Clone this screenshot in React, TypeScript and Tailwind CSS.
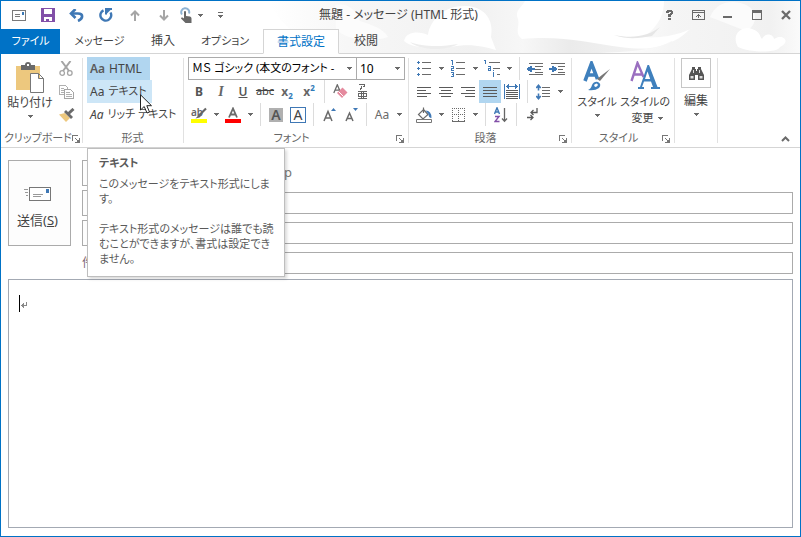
import React from 'react'

interface IconProps {
    w: number
    h: number
    smooth?: boolean
    children: React.ReactNode
}

const Icon = ({ w, h, smooth, children }: IconProps) => (
    <svg width={w} height={h} viewBox={`0 0 ${w} ${h}`} fill="none" shapeRendering={smooth ? 'auto' : 'crispEdges'} aria-hidden="true" className="block shrink-0">
        {children}
    </svg>
)

const Caret = () => (
    <Icon w={5} h={3}>
        <path d="M0 0h5v1H0zM1 1h3v1H1zM2 2h1v1H2z" fill="#6a6a6a" />
    </Icon>
)

const Tool = ({ label, active, children }: { label: string; active?: boolean; children: React.ReactNode }) => (
    <button aria-label={label} className={`flex h-full w-[22px] shrink-0 items-center justify-center ${active ? 'bg-[#b1d6f0]' : ''}`}>
        {children}
    </button>
)

const Drop = ({ label }: { label: string }) => (
    <button aria-label={label} className="flex h-full w-3 shrink-0 items-center justify-center">
        <Caret />
    </button>
)

const Sep = () => (
    <div className="flex h-full w-[9px] shrink-0 justify-center">
        <div className="h-full w-px bg-[#dcdcdc]" />
    </div>
)

const Row = ({ children }: { children: React.ReactNode }) => <div className="flex h-[23px] items-center">{children}</div>

const Launcher = ({ label }: { label: string }) => (
    <button aria-label={label}>
        <Icon w={8} h={8}>
            <path d="M.5 6V.5H6M3 3l3 3M7.5 3v4.5H3" stroke="#777" />
            <path d="M5 5h2v2H5z" fill="#777" />
        </Icon>
    </button>
)

interface GroupProps {
    title?: string
    launcher?: boolean
    className: string
    children: React.ReactNode
}

const Group = ({ title, launcher, className, children }: GroupProps) => (
    <>
        <section className={`relative flex shrink-0 flex-col ${className}`}>
            <div className="h-[69px]">{children}</div>
            <div className="flex h-6 items-center justify-between pt-1 pr-1 pl-[3px]">
                <span className="flex-1 text-center text-[11px] whitespace-nowrap text-[#666]">{title}</span>
                {launcher && <Launcher label={`${title}の詳細`} />}
            </div>
        </section>
        <div className="mt-px mb-1 w-px shrink-0 bg-[#e1e1e1]" />
    </>
)

/* lines are [x, width] pairs, one for each line of the icon */
const aligns = [
    { label: '左揃え', lines: [[0, 14], [0, 9], [0, 14], [0, 10]] },
    { label: '中央揃え', lines: [[0, 14], [2, 10], [0, 14], [2, 10]] },
    { label: '右揃え', lines: [[0, 14], [5, 9], [0, 14], [4, 10]] },
    { label: '両端揃え', lines: [[0, 14], [0, 14], [0, 14], [0, 14]], active: true },
]

const tabs = [
    { name: 'メッセージ', className: 'w-[79px] text-[11px]' },
    { name: '挿入', className: 'w-12' },
    { name: 'オプション', className: 'w-[76px] text-[11px]' },
    { name: '書式設定', className: 'w-[76px]', active: true },
    { name: '校閲', className: 'w-[54px]' },
]

const Clouds = () => (
    <svg className="absolute top-0 right-0 h-[52px] w-[540px]" viewBox="0 0 540 52" aria-hidden="true">
        <defs>
            <linearGradient id="sky" x1="0" x2="1">
                <stop offset="0" stopColor="#fff" />
                <stop offset=".3" stopColor="#f7f7f7" />
                <stop offset=".8" stopColor="#f1f1f1" />
                <stop offset="1" stopColor="#f7f7f7" />
            </linearGradient>
            <linearGradient id="hill" x1="0" x2="1">
                <stop offset="0" stopColor="#f7f7f7" />
                <stop offset=".3" stopColor="#ebebeb" />
                <stop offset="1" stopColor="#f7f7f7" />
            </linearGradient>
            <linearGradient id="edge" x1="0" x2="1">
                <stop offset="0" stopColor="#fff" />
                <stop offset=".35" stopColor="#f5f5f5" />
                <stop offset=".85" stopColor="#f1f1f1" />
                <stop offset="1" stopColor="#fafafa" />
            </linearGradient>
        </defs>
        <path d="M10 0H265C262 6 254 10 258 18C260 26 254 32 262 38V52H70C50 40 20 30 10 0Z" fill="url(#sky)" />
        <path d="M75 4C88 2 95 8 100 20C112 24 124 28 128 36C110 42 84 38 76 28Z" fill="#fcfcfc" />
        <path d="M144 40C146 30 160 30 168 34C170 18 186 4 206 5C226 6 234 20 231 36L236 49C224 46 212 42 190 46C170 49 150 46 144 40Z" fill="#fff" />
        <path d="M150 41C162 46 182 46 198 43C186 50 160 50 150 41Z" fill="#ededed" />
        <path d="M262 38C300 34 330 42 360 46C390 50 400 46 412 40L420 52H262Z" fill="url(#hill)" />
        <path d="M404 0H540V52H340C400 50 416 42 430 28C424 32 402 38 384 36C400 24 404 12 404 0Z" fill="url(#edge)" />
        <path d="M400 26C388 35 374 38 354 34C368 39 380 37 392 35Z" fill="#e6e6e6" />
        <path d="M450 16C456 0 474 -2 486 4C500 10 496 26 486 30Z" fill="#fbfbfb" />
        <path d="M478 46C470 32 484 24 492 28C500 30 500 36 502 38C506 30 514 34 514 38C522 32 532 40 520 46C518 52 490 52 478 46Z" fill="#fff" />
    </svg>
)

const TitleBar = () => (
    <div className="flex h-7 items-center">
        <div className="flex h-full items-center pl-[3px] *:flex *:h-full *:items-center *:justify-center">
            <button aria-label="メッセージ" className="w-[29px]">
                <Icon w={14} h={11}>
                    <path d="M.5.5h13v10H.5zM3 4.500h5M3 6.500h5" stroke="#7a7a7a" />
                    <path d="M10 2h2v3h-2z" fill="#3b78b5" />
                </Icon>
            </button>
            <button aria-label="上書き保存" className="w-[29px]">
                <Icon w={14} h={14}>
                    <path d="M0 0h14v14H0zM3 1v5h8V1zM3 9v4h2v-2h3v2h3V9z" fill="#8250a8" fillRule="evenodd" />
                </Icon>
            </button>
            <button aria-label="元に戻す" className="w-[29px]">
                <Icon w={15} h={13} smooth>
                    <path d="M2 4.500H9C14.500 4.500 14.500 9.500 9 12" stroke="#3f78b5" strokeWidth="2.600" />
                    <path d="M6.500 0L2 4.500L6.500 9" stroke="#3f78b5" strokeWidth="2.600" />
                </Icon>
            </button>
            <button aria-label="やり直し" className="w-[29px]">
                <Icon w={14} h={14} smooth>
                    <path d="M4.500 2.300A5.400 5.400 0 1 0 11.500 4.500" stroke="#3f78b5" strokeWidth="2.400" />
                    <path d="M7 6.500V1h6" stroke="#3f78b5" strokeWidth="2" />
                    <path d="M7 1h5.500L7 6.500z" fill="#3f78b5" />
                </Icon>
            </button>
            <button aria-label="前へ" className="w-[29px]">
                <Icon w={10} h={11} smooth>
                    <path d="M5 11V2M1 5.500L5 1.500L9 5.500" stroke="#a6a6a6" strokeWidth="2" />
                </Icon>
            </button>
            <button aria-label="次へ" className="w-[29px]">
                <Icon w={10} h={11} smooth>
                    <path d="M5 0V9M1 5.500L5 9.500L9 5.500" stroke="#a6a6a6" strokeWidth="2" />
                </Icon>
            </button>
            <button aria-label="タッチ/マウス モードの切り替え" className="w-4">
                <Icon w={13} h={16} smooth>
                    <path d="M2 7.500A4 4 0 1 1 9 6.500" stroke="#8fb4d4" strokeWidth="2" />
                    <path d="M4 4.500q1-1 2 0V9l4 .5q1.500.5 1.500 2V16H5.500L1 11.500q0-1.500 1.500-1L4 11.500z" fill="#686868" />
                </Icon>
            </button>
            <button aria-label="モードの一覧" className="w-3"><Caret /></button>
            <button aria-label="ツール バーのカスタマイズ" className="w-7">
                <Icon w={5} h={7}>
                    <path d="M0 0h5v1H0zM0 3h5v1H0zM1 4h3v1H1zM2 5h1v1H2z" fill="#6a6a6a" />
                </Icon>
            </button>
        </div>
        <h1 className="flex-1 pl-7 text-center text-[12px] whitespace-nowrap text-[#444]">無題 - メッセージ (HTML 形式)</h1>
        <div className="flex h-full shrink-0 items-center pl-[120px] *:flex *:h-full *:w-[29px] *:items-center *:justify-center">
            <button aria-label="ヘルプ">
                <Icon w={8} h={10}>
                    <path d="M1 0h5v1h1v3H6v1H5v2H2V4h2V3h1V2H3v1H0V1h1zM2 8h3v2H2z" fill="#6a6a6a" />
                </Icon>
            </button>
            <button aria-label="リボンの表示オプション">
                <Icon w={13} h={10}>
                    <path d="M.5.5h12v9H.5zM1 2.500h11M6.500 4v4M4 6.500h1M8 6.500h1M5 5.500h3" stroke="#6a6a6a" />
                </Icon>
            </button>
            <button aria-label="最小化">
                <Icon w={9} h={10}><path d="M0 6h9v2H0z" fill="#6a6a6a" /></Icon>
            </button>
            <button aria-label="最大化">
                <Icon w={10} h={10}><path d="M0 0h10v10H0zM1 3v6h8V3z" fill="#6a6a6a" fillRule="evenodd" /></Icon>
            </button>
            <button aria-label="閉じる">
                <Icon w={10} h={10} smooth><path d="M1 1l8 8M9 1L1 9" stroke="#6a6a6a" strokeWidth="2.300" /></Icon>
            </button>
        </div>
    </div>
)

const ClipboardGroup = () => (
    <Group title="クリップボード" launcher className="w-[81px]">
        <div className="flex">
            <button className="flex w-[58px] flex-col items-center pt-[5px]">
                <Icon w={28} h={31} smooth>
                    <path d="M0 4h24v24H0z" fill="#edc87e" />
                    <path d="M5 3h4q0-3 3-3t3 3h4v5H5z" fill="#6a6a6a" />
                    <path d="M11 2h2v2h-2z" fill="#fff" />
                    <path d="M14.500 11.500h8l5 5v14h-13zM22.500 11.500v5h5" fill="#fff" stroke="#777" />
                </Icon>
                <span className="mt-px leading-[18px] whitespace-nowrap">貼り付け</span>
                <span className="pt-[3px]"><Caret /></span>
            </button>
            <div className="flex flex-col *:flex *:h-[23px] *:items-center">
                <button aria-label="切り取り">
                    <Icon w={14} h={15} smooth>
                        <path d="M2.500 0L10 10M11.500 0L4 10" stroke="#a5a5a5" strokeWidth="2" />
                        <circle cx="3.200" cy="12" r="2.300" stroke="#a5a5a5" strokeWidth="1.300" />
                        <circle cx="10.800" cy="12" r="2.300" stroke="#a5a5a5" strokeWidth="1.300" />
                    </Icon>
                </button>
                <button aria-label="コピー">
                    <Icon w={15} h={14}>
                        <path d="M.5.5h6l2 2v7h-8zM2 3.500h3M2 5.500h3M2 7.500h3" stroke="#b0b0b0" />
                        <path d="M5.500 4.500h6l3 3v6h-9z" fill="#fff" stroke="#a5a5a5" />
                        <path d="M7 7.500h4M7 9.500h6M7 11.500h6" stroke="#b0b0b0" />
                    </Icon>
                </button>
                <button aria-label="書式のコピー/貼り付け">
                    <Icon w={16} h={14} smooth>
                        <path d="M0 6.500l6-1.500 5 5-4 4z" fill="#edc87e" />
                        <path d="M5 4l2-2 7 7-2 2z" fill="#6a6a6a" />
                        <path d="M9.500 5.500L14.500 1" stroke="#6a6a6a" strokeWidth="3" />
                    </Icon>
                </button>
            </div>
        </div>
    </Group>
)

const FormatGroup = () => (
    <Group title="形式" className="w-[100px]">
        <div className="flex flex-col items-start pl-1 *:flex *:h-[23px] *:items-center *:gap-1 *:pl-[3px] *:whitespace-nowrap">
            <button className="w-[63px] bg-[#b1d6f0]"><span className="text-[12px] font-semibold text-[#5a5a5a]">Aa</span>HTML</button>
            <button className="w-[65px] bg-[#cde6f7] text-[11px]"><span className="text-[12px]">Aa</span>テキスト</button>
            <button className="text-[11px]"><i className="text-[12px]">Aa</i>リッチ テキスト</button>
        </div>

        <div className="absolute top-[37px] left-[57px] z-20">
            <Icon w={12} h={20} smooth>
                <path d="M.5.8V16L4.200 12.500L7 19L9.500 18L6.800 11.700H11.500Z" fill="#fff" stroke="#222" />
            </Icon>
        </div>

        <div role="tooltip" className="absolute top-[91px] left-1 z-10 h-[129px] w-[198px] border border-[#bebebe] bg-white pt-[6px] pl-[11px] text-[11px] leading-[15px] whitespace-nowrap text-[#5a5a5a] shadow-[2px_2px_3px_rgba(0,0,0,0.15)]">
            <p className="mb-[6px] font-bold">テキスト</p>
            <p>このメッセージをテキスト形式にしま<br />す。</p>
            <p className="mt-[15px]">テキスト形式のメッセージは誰でも読<br />むことができますが、書式は設定でき<br />ません。</p>
        </div>
    </Group>
)

const FontGroup = () => (
    <Group title="フォント" launcher className="w-[224px]">
        <div className="pl-1">
            <Row>
                <div className="flex h-full w-[217px] border border-[#ababab] bg-white text-black">
                    <button role="combobox" aria-label="フォント" className="flex w-[168px] items-center justify-between border-r border-[#ababab] pr-1 pl-[3px] text-[11px] whitespace-nowrap">
                        <span>ＭＳ ゴシック (本文のフォント -</span><Caret />
                    </button>
                    <button role="combobox" aria-label="フォント サイズ" className="flex flex-1 items-center justify-between pr-1 pl-[3px]">
                        <span>10</span><Caret />
                    </button>
                </div>
            </Row>
            <Row>
                <Tool label="太字"><b className="text-[#555]">B</b></Tool>
                <Tool label="斜体"><i className="font-['Liberation_Serif'] text-[14px] font-bold text-[#666]">I</i></Tool>
                <Tool label="下線"><b className="font-semibold text-[#555] underline">U</b></Tool>
                <Tool label="取り消し線"><span className="text-[11px] line-through">abc</span></Tool>
                <Tool label="下付き"><b className="text-[#666]">x</b><b className="pt-2 text-[8px] text-[#2f7ab8]">2</b></Tool>
                <Tool label="上付き"><b className="text-[#666]">x</b><b className="pb-2 text-[8px] text-[#2f7ab8]">2</b></Tool>
                <Sep />
                <Tool label="書式のクリア">
                    <Icon w={15} h={15} smooth>
                        <path d="M.8 9L4.300 0.800L7 7M2 6.200h4" stroke="#6a6a6a" strokeWidth="1.300" />
                        <path d="M9.500 3.500l5 5-5.500 5.500-5-5z" fill="#e58a9e" />
                        <path d="M5.500 7.500l5 5" stroke="#fff" />
                    </Icon>
                </Tool>
                <Tool label="ルビ">
                    <Icon w={9} h={15}>
                        <path d="M1 .5h6M6.500 1v1L5 3M3.500 2v2L2 6" stroke="#666" />
                        <path d="M0 7.500h9M3.500 8v6M5.500 8v6M.5 9v3.500h8V9.500H.5M0 14.500h9" stroke="#666" />
                    </Icon>
                </Tool>
            </Row>
            <Row>
                <Tool label="蛍光ペンの色">
                    <span className="relative flex h-4 w-4 items-start border-b-4 border-[#ff0] text-[10px] leading-[10px] font-semibold text-[#666]">
                        ab
                        <span className="absolute top-0 right-0">
                            <Icon w={12} h={12} smooth>
                                <path d="M11 1.500L4.500 8" stroke="#666" strokeWidth="2.200" />
                                <path d="M5 6.500L.5 11.500l4-1 2-2z" fill="#666" />
                            </Icon>
                        </span>
                    </span>
                </Tool>
                <Drop label="蛍光ペンの色の一覧" />
                <Tool label="フォントの色">
                    <Icon w={16} h={16} smooth>
                        <path d="M4 10.500L8 1.500L12 10.500M5.500 7.500h5" stroke="#6a6a6a" strokeWidth="1.800" />
                        <path d="M0 12h16v4H0z" fill="#f00" />
                    </Icon>
                </Tool>
                <Drop label="フォントの色の一覧" />
                <Sep />
                <Tool label="文字の網かけ"><span className="w-[14px] bg-[#b0b0b0] text-center text-[14px] leading-[14px] font-semibold text-[#555]">A</span></Tool>
                <Tool label="囲み線"><span className="w-4 border border-[#3f78b5] text-center text-[14px] leading-[14px]">A</span></Tool>
                <Sep />
                <Tool label="フォントの拡大">
                    <Icon w={13} h={14} smooth>
                        <path d="M1 13L5 3.500L9 13M2.500 10h5" stroke="#6a6a6a" strokeWidth="1.500" />
                        <path d="M8 3l2.500-3L13 3z" fill="#3f78b5" />
                    </Icon>
                </Tool>
                <Tool label="フォントの縮小">
                    <Icon w={13} h={14} smooth>
                        <path d="M1 13L4.500 5L8 13M2.500 10.500h4" stroke="#6a6a6a" strokeWidth="1.500" />
                        <path d="M8 0l2.500 3L13 0z" fill="#3f78b5" />
                    </Icon>
                </Tool>
                <Sep />
                <Tool label="文字種の変換"><span className="text-[12px] text-[#6a6a6a]">Aa</span></Tool>
                <Drop label="文字種の一覧" />
            </Row>
        </div>
    </Group>
)

const ParagraphGroup = () => (
    <Group title="段落" launcher className="w-[162px]">
        <div className="pl-1">
            <Row>
                <Tool label="箇条書き">
                    <Icon w={14} h={15}>
                        <path d="M0 1h3v1H0zM1 0h1v3H1zM0 7h3v1H0zM1 6h1v3H1zM0 13h3v1H0zM1 12h1v3H1z" fill="#3f78b5" />
                        <path d="M5 1.500h9M5 7.500h9M5 13.500h9" stroke="#6a6a6a" />
                    </Icon>
                </Tool>
                <Drop label="箇条書きの一覧" />
                <Tool label="段落番号">
                    <Icon w={14} h={17}>
                        <path d="M0 .5h1.500V5M0 6.500h2.500v2H.5v2H3M0 12.500h2.500v4H0M1 14.500h1" stroke="#3f78b5" />
                        <path d="M5 2.500h9M5 8.500h9M5 14.500h9" stroke="#6a6a6a" />
                    </Icon>
                </Tool>
                <Drop label="段落番号の一覧" />
                <Tool label="アウトライン">
                    <Icon w={17} h={17}>
                        <path d="M0 .5h1.500V4M4 6.500h2.500v4h-2v-2h2M9.500 10v1M9.500 12v5" stroke="#3f78b5" />
                        <path d="M5 2.500h11M9 8.500h7M13 14.500h3" stroke="#6a6a6a" />
                    </Icon>
                </Tool>
                <Drop label="アウトラインの一覧" />
                <Sep />
                <Tool label="インデントを減らす">
                    <Icon w={16} h={12}>
                        <path d="M2 .5h14M8 3.500h8M8 6.500h6M2 11.500h14M8 9h8" stroke="#6a6a6a" />
                        <path d="M0 5h8v2H0zM1 4h2v4H1zM3 3h2v6H3z" fill="#3f78b5" />
                    </Icon>
                </Tool>
                <Tool label="インデントを増やす">
                    <Icon w={16} h={12}>
                        <path d="M2 .5h14M9 3.500h7M9 6.500h5M2 11.500h14M9 9h7" stroke="#6a6a6a" />
                        <path d="M0 5h8v2H0zM5 4h2v4H5zM3 3h2v6H3z" fill="#3f78b5" />
                    </Icon>
                </Tool>
            </Row>
            <Row>
                {aligns.map((item) => (
                    <Tool key={item.label} label={item.label} active={item.active}>
                        <Icon w={14} h={10}>
                            {item.lines.map(([x, width], i) => (
                                <rect key={i} x={x} y={i * 3} width={width} height="1" fill="#5a5a5a" />
                            ))}
                        </Icon>
                    </Tool>
                ))}
                <Tool label="均等割り付け">
                    <Icon w={16} h={15}>
                        <path d="M.5 0v15M15.500 0v15M2 2.500h12M4.500 0v5M3.500 1v3M11.500 0v5M12.500 1v3" stroke="#3f78b5" />
                        <path d="M2 6.500h12M2 8.500h12M2 10.500h12M2 12.500h12M2 14.500h12" stroke="#5a5a5a" />
                    </Icon>
                </Tool>
                <Sep />
                <Tool label="行間">
                    <Icon w={14} h={16} smooth>
                        <path d="M2.500 1v5.500M2.500 9.500v5.500M.3 4L2.500 1.300L4.700 4M.3 12L2.500 14.700L4.700 12" stroke="#3f78b5" strokeWidth="1.600" />
                        <path d="M6 3.500h8M6 6.500h8M6 9.500h8M6 12.500h8" stroke="#6a6a6a" />
                    </Icon>
                </Tool>
                <Drop label="行間の一覧" />
            </Row>
            <Row>
                <Tool label="塗りつぶし">
                    <Icon w={16} h={16} smooth>
                        <path d="M7.500 2.500l4.500 5L7 12 2.500 7.500zM7.500 6V.5" stroke="#6a6a6a" strokeWidth="1.200" />
                        <path d="M9.500 3.500q6 0 6 7.500q-3 0-3-4z" fill="#3f78b5" />
                        <path d="M.5 12.500h15v3H.5z" fill="#fff" stroke="#777" />
                    </Icon>
                </Tool>
                <Drop label="塗りつぶしの一覧" />
                <Tool label="罫線">
                    <Icon w={13} h={14}>
                        <path d="M0 .5h13M0 6.500h13M.5 0v13M6.500 0v13M12.500 0v13" stroke="#6a6a6a" strokeDasharray="1 1" />
                        <path d="M0 13.500h13" stroke="#6a6a6a" />
                    </Icon>
                </Tool>
                <Drop label="罫線の一覧" />
                <Sep />
                <Tool label="並べ替え">
                    <Icon w={14} h={16} smooth>
                        <path d="M.5 7L3 .8L5.500 7M1.500 5h3" stroke="#3f78b5" strokeWidth="1.400" />
                        <path d="M1 9.500h4L1 14.500h4.500" stroke="#8250a8" strokeWidth="1.400" />
                        <path d="M10.500 1v13M8 11.500l2.500 2.700 2.500-2.700" stroke="#666" strokeWidth="1.300" />
                    </Icon>
                </Tool>
                <Sep />
                <Tool label="編集記号の表示">
                    <Icon w={11} h={13} smooth>
                        <path d="M10 0v4.500H4M6.500 2L4 4.500L6.500 7M0 9.500h6M3.500 7L6 9.500L3.500 12" stroke="#5a5a5a" strokeWidth="1.300" />
                    </Icon>
                </Tool>
            </Row>
        </div>
    </Group>
)

const StyleGroup = () => (
    <Group title="スタイル" launcher className="w-[102px]">
        <div className="flex text-[11px] *:flex *:flex-col *:items-center *:pt-1 *:leading-4 *:whitespace-nowrap">
            <button className="w-[50px]">
                <Icon w={28} h={30} smooth>
                    <path d="M2 20L8.500 2.500L14.500 18M5 14h7" stroke="#3f80bd" strokeWidth="3.600" />
                    <path d="M27 8L17 20l-3-2 5-4z" fill="#777" />
                    <path d="M5 29q3-1 4-5 2-4 6-3 4 2 1 6-4 3-11 2z" fill="#3f80bd" />
                    <path d="M11 24q3-3 4 0-1 2-3 2z" fill="#fff" />
                </Icon>
                <span className="pt-[3px]">スタイル</span>
                <span className="pt-1"><Caret /></span>
            </button>
            <button className="w-[46px]">
                <Icon w={30} h={30} smooth>
                    <path d="M1.500 20L7.500 2L13.500 16M4 13.500h8" stroke="#9a6fc0" strokeWidth="2.400" />
                    <path d="M17.500 4h1.500L27.500 26H30v2h-9v-2h2l-2-5.500h-7L12 26h2v2H8v-2h2zM15 18h5.200L17.500 10.500z" fill="#3f80bd" fillRule="evenodd" />
                </Icon>
                <span className="pt-[3px]">スタイルの</span>
                <span className="flex items-center gap-1 pl-1">変更 <Caret /></span>
            </button>
        </div>
    </Group>
)

const EditGroup = () => (
    <Group className="w-[42px]">
        <button className="flex w-full flex-col items-center pt-px leading-4">
            <span className="flex size-[30px] items-center justify-center border border-[#c6c6c6]">
                <Icon w={15} h={13} smooth>
                    <path d="M3 0h3v2h1v2h1V2h1V0h3v2l3 6v5H9V8H6v5H0V8l3-6z" fill="#555" />
                    <path d="M1.500 9h3v2.500h-3zM10.500 9h3v2.500h-3zM4 3h1v3H4zM10 3h1v3h-1z" fill="#ddd" />
                </Icon>
            </span>
            <span className="pt-[5px]">編集</span>
            <span className="pt-1"><Caret /></span>
        </button>
    </Group>
)

const field = 'h-[22px] min-w-0 flex-1 border border-[#ababab] bg-white px-1 outline-none'
const fieldButton = 'h-[26px] w-[75px] shrink-0 border border-[#ababab] bg-[#fdfdfd]'

const MessageHeader = () => (
    <div className="flex items-start gap-[11px]">
        <button className="flex h-[86px] w-[63px] shrink-0 flex-col items-center border border-[#ababab] bg-[#fdfdfd] pt-[26px]">
            <span className="pr-1">
                <Icon w={27} h={14}>
                    <path d="M5.500.5h21v13h-21z" fill="#fff" stroke="#777" />
                    <path d="M0 2.500h4M1 5.500h3M2 8.500h2M9 7.500h10M9 9.500h8" stroke="#999" />
                    <path d="M22 2h3v4h-3z" fill="#3f78b5" />
                </Icon>
            </span>
            <span className="mt-[10px] pr-1 text-[13px]">送信(<u>S</u>)</span>
        </button>
        <div className="flex min-w-0 flex-1 flex-col gap-1 *:flex *:h-[26px] *:items-center *:gap-2">
            <div>
                <button aria-label="差出人" className={fieldButton} />
                <span className="w-[127px] text-right text-[13px] text-[#777]">p</span>
            </div>
            <div>
                <button aria-label="宛先" className={fieldButton} />
                <input aria-label="宛先" className={field} />
            </div>
            <div>
                <button aria-label="CC" className={fieldButton} />
                <input aria-label="CC" className={field} />
            </div>
            <div>
                <label htmlFor="subject" className="w-[75px] text-[#7a6474]">件名</label>
                <input id="subject" className={field} />
            </div>
        </div>
    </div>
)

const App = () => {
    return (
        <div className="flex min-h-screen flex-col border border-[#0072c6] bg-white font-['Noto_Sans','Noto_Sans_CJK_JP',sans-serif] text-[12px] text-[#444] [font-feature-settings:'palt']">
            <header className="relative">
                <Clouds />
                <div className="relative">
                    <TitleBar />
                    <nav className="flex h-[25px] *:flex *:items-center *:justify-center *:border-b *:border-[#d5d5d5] *:whitespace-nowrap">
                        <button className="w-[59px] border-b-[#0072c6]! bg-[#0072c6] text-[11px] text-white">ファイル</button>
                        {tabs.map((tab) => (
                            <button
                                key={tab.name}
                                className={`${tab.className} ${tab.active ? 'border-x border-t border-b-white! bg-white text-[#0072c6]' : ''}`}
                            >
                                {tab.name}
                            </button>
                        ))}
                        <div className="flex-1" />
                    </nav>
                </div>
            </header>

            <div className="flex h-[94px] border-b border-[#d5d5d5] pt-[3px]">
                <ClipboardGroup />
                <FormatGroup />
                <FontGroup />
                <ParagraphGroup />
                <StyleGroup />
                <EditGroup />
                <button aria-label="リボンを折りたたむ" className="mt-auto mr-[10px] mb-[5px] ml-auto">
                    <Icon w={9} h={6} smooth><path d="M1 5l3.500-3.500L8 5" stroke="#6a6a6a" strokeWidth="2" /></Icon>
                </button>
            </div>

            <main className="flex flex-1 flex-col gap-[3px] px-[7px] pt-3 pb-2">
                <MessageHeader />
                <div className="relative flex flex-1 border border-[#a3a9b3]">
                    <textarea aria-label="本文" className="flex-1 resize-none px-[10px] py-3 outline-none" />
                    <div className="absolute top-[15px] left-[10px]">
                        <Icon w={8} h={17}>
                            <path d="M.5 0v17" stroke="#000" />
                            <path d="M7.500 7v3.500H2M4.500 8v5M3.500 9v3" stroke="#888" />
                        </Icon>
                    </div>
                </div>
            </main>
        </div>
    )
}

export default App
